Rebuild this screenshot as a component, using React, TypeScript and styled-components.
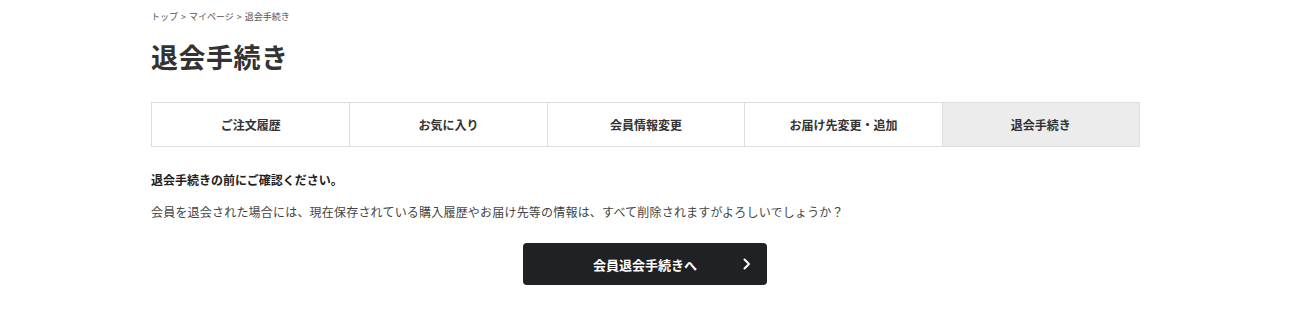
import React from 'react';
import styled, { createGlobalStyle } from 'styled-components';

const GlobalStyle = createGlobalStyle`
  html, body {
    margin: 0;
    padding: 0;
    background: #fff;
    font-family: "Noto Sans CJK JP", "Noto Sans", sans-serif;
    color: #333;
  }
`;

const Page = styled.div`
  width: 989px;
  margin-left: 151px;
  padding-top: 10px;
`;

const Breadcrumb = styled.nav`
  font-size: 9px;
  line-height: 14px;
  color: #555;
  display: flex;
  gap: 3px;
`;

const Crumb = styled.a`
  color: inherit;
  text-decoration: none;
`;

const Title = styled.h1`
  margin: 15px 0 0;
  font-size: 27px;
  line-height: 36px;
  font-weight: 700;
  color: #333;
  letter-spacing: 0.5px;
`;

const Tabs = styled.ul`
  list-style: none;
  margin: 27px 0 0;
  padding: 0;
  display: grid;
  grid-template-columns: repeat(5, 1fr);
  border: 1px solid #ddd;
  height: 45px;
  box-sizing: border-box;
`;

const Tab = styled.li<{ $active?: boolean }>`
  display: flex;
  align-items: center;
  justify-content: center;
  font-size: 12px;
  font-weight: 700;
  color: #333;
  background: ${(p) => (p.$active ? '#ececec' : '#fff')};
  border-left: 1px solid #ddd;
  &:first-child {
    border-left: none;
  }
`;

const Notice = styled.h2`
  margin: 24px 0 0;
  font-size: 12px;
  line-height: 18px;
  font-weight: 700;
  color: #222;
`;

const Body = styled.p`
  margin: 14px 0 0;
  font-size: 12px;
  line-height: 18px;
  color: #444;
  letter-spacing: 0.2px;
`;

const Actions = styled.div`
  display: flex;
  justify-content: center;
  margin-top: 22px;
`;

const WithdrawButton = styled.button`
  position: relative;
  width: 244px;
  height: 42px;
  margin-left: -1px;
  border: none;
  border-radius: 4px;
  background: #1f2124;
  color: #fff;
  font-family: inherit;
  font-size: 13px;
  font-weight: 700;
  cursor: pointer;
  display: flex;
  align-items: center;
  justify-content: center;
`;

const Chevron = styled.svg`
  position: absolute;
  right: 16px;
  top: 50%;
  transform: translateY(-50%);
`;

const tabs = ['ご注文履歴', 'お気に入り', '会員情報変更', 'お届け先変更・追加', '退会手続き'];

export default function App() {
  return (
    <>
      <GlobalStyle />
      <Page>
        <Breadcrumb>
          <Crumb href="#">トップ</Crumb>
          <span>&gt;</span>
          <Crumb href="#">マイページ</Crumb>
          <span>&gt;</span>
          <span>退会手続き</span>
        </Breadcrumb>
        <Title>退会手続き</Title>
        <Tabs>
          {tabs.map((t, i) => (
            <Tab key={t} $active={i === tabs.length - 1}>
              {t}
            </Tab>
          ))}
        </Tabs>
        <Notice>退会手続きの前にご確認ください。</Notice>
        <Body>
          会員を退会された場合には、現在保存されている購入履歴やお届け先等の情報は、すべて削除されますがよろしいでしょうか？
        </Body>
        <Actions>
          <WithdrawButton>
            会員退会手続きへ
            <Chevron width="8" height="12" viewBox="0 0 8 12">
              <path d="M1.5 1.5 L6 6 L1.5 10.5" fill="none" stroke="#fff" strokeWidth="2" strokeLinecap="round" strokeLinejoin="round" />
            </Chevron>
          </WithdrawButton>
        </Actions>
      </Page>
    </>
  );
}
